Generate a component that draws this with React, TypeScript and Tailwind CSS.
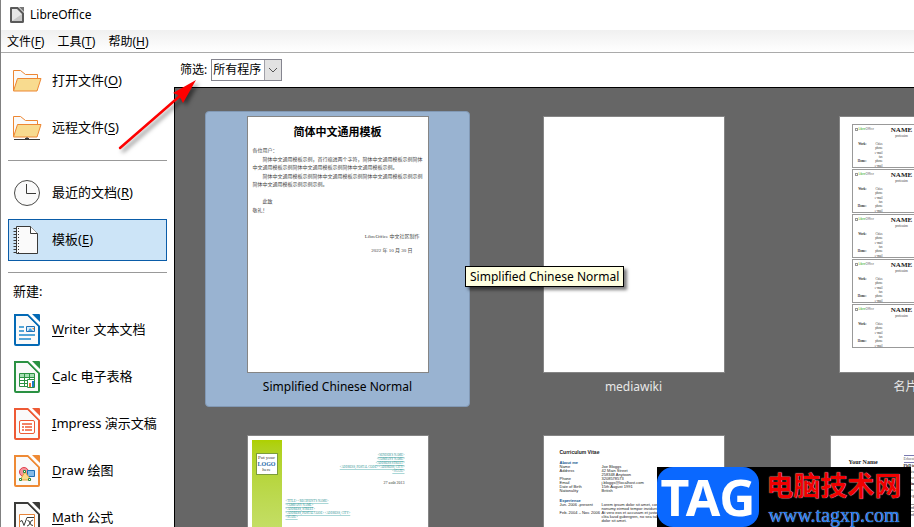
import type { ReactNode } from "react";

interface CvEntry {
  label: string;
  lines: string[];
}

const MENUS = [
  { label: "文件", accessKey: "F" },
  { label: "工具", accessKey: "T" },
  { label: "帮助", accessKey: "H" },
];

const CV_ROWS: CvEntry[] = [
  { label: "Name", lines: ["Joe Bloggs"] },
  { label: "Address", lines: ["42 Main Street", "258348 Anytown"] },
  { label: "Phone", lines: ["3208578573"] },
  { label: "Email", lines: ["j.bloggs@localhost.com"] },
  { label: "Date of Birth", lines: ["15th August 1991"] },
  { label: "Nationality", lines: ["British"] },
];

const CV_JOBS: CvEntry[] = [
  {
    label: "Jun. 2006 -present",
    lines: ["Lorem ipsum dolor sit amet, consetetur sadipscing", "nonumy eirmod tempor invidunt"],
  },
  {
    label: "Feb. 2004 – Nov. 2006",
    lines: ["At vero eos et accusam et justo duo dolores", "clita kasd gubergren, no sea takimata", "dolor sit amet."],
  },
];

function AccessKey({ children }: { children: ReactNode }) {
  return <span className="underline decoration-1 underline-offset-2">{children}</span>;
}

function AppIcon() {
  return (
    <svg className="h-4 w-4" viewBox="0 0 16 16" aria-hidden="true">
      <path d="M2 0h7l6 6v8.500q0 1.500-1.500 1.500h-11Q1 16 1 15V1Q1 0 2 0z" fill="#5a5a5a" />
      <path d="M3 2h5l5 5v7H3z" fill="#e6e6e6" />
      <path d="M3 14L13 7v7z" fill="#c8c8c8" />
      <path d="M10 0h5v5z" fill="#777" />
    </svg>
  );
}

function FolderIcon({ remote = false }: { remote?: boolean }) {
  return (
    <svg className="h-8 w-7 shrink-0 overflow-visible" viewBox="0 0 28 32" aria-hidden="true">
      <g transform={remote ? "translate(0 -1)" : undefined} stroke="#ed8733" strokeLinejoin="round">
        <path d="M1.500 25.500v-20h7l5 4h12v5" fill="#fafafa" />
        <path d="M5.500 13.500h23.500l-4 12.500H1.500z" fill="#f8db8f" />
      </g>
      {remote && <path d="M2 27.500h26M15 25v3" stroke="#3a3a38" strokeWidth="1" fill="none" />}
      {remote && <path d="M13 26h4v2h-4z" fill="#3a3a38" />}
    </svg>
  );
}

function ClockIcon() {
  return (
    <svg className="h-8 w-7 shrink-0" viewBox="0 0 28 32" aria-hidden="true">
      <circle cx="15" cy="16" r="12.500" fill="#fafafa" stroke="#4a4a48" />
      <path d="M14.500 7v9.500H24" fill="none" stroke="#3a3a38" />
    </svg>
  );
}

function NotebookIcon() {
  return (
    <svg className="h-8 w-7 shrink-0" viewBox="0 0 28 32" aria-hidden="true">
      <path d="M4.500 2.500h14l7 7v20h-21z" fill="#fafafa" stroke="#3a3a38" />
      <path d="M18.500 2.500v7h7" fill="#fff" stroke="#3a3a38" />
      <path d="M3 4v25" stroke="#3a3a38" strokeWidth="3" strokeDasharray="1 2" />
      <path d="M6.500 4v25" stroke="#3a3a38" strokeDasharray="1 2" />
    </svg>
  );
}

function DocumentIcon({ color, children }: { color: string; children: ReactNode }) {
  return (
    <svg className="h-8 w-7 shrink-0" viewBox="0 0 28 32" aria-hidden="true">
      <path d="M3 1h13l11 11v18q0 1-1 1H4q-1 0-1-1z" fill="#fafafa" stroke={color} strokeWidth="2" />
      <path d="M15 0h13v13z" fill="#fff" />
      <path d="M15 0l13 13" stroke={color} strokeWidth="1.500" />
      <path d="M20 0h7q1 0 1 1v7z" fill={color} />
      {children}
    </svg>
  );
}

function WriterIcon() {
  return (
    <DocumentIcon color="#0369b5">
      <path d="M7 13h5M7 17h5M7 21h16M7 25h12" stroke="#1e8bcd" strokeWidth="1.500" />
      <path d="M14.500 12.500h8v5h-8z" fill="#d8ecfa" stroke="#1e6fb5" />
      <path d="M16 17l2-3 3 3z" fill="#4ba0dc" />
      <path d="M20 14h2v2z" fill="#f08c3a" />
    </DocumentIcon>
  );
}

function CalcIcon() {
  return (
    <DocumentIcon color="#2a9142">
      <path d="M7.500 12.500h15v13h-15z" fill="#fff" stroke="#2a9142" />
      <path d="M8 13h14v3H8z" fill="#a5ddb2" />
      <path d="M7 16.500h16M7 19.500h16M7 22.500h16M12.500 12v14M17.500 12v14" stroke="#2a9142" />
      <path d="M15.500 18.500h7v8h-7z" fill="#fff" stroke="#2a9142" />
      <path d="M17 22h2v4h-2z" fill="#e5742e" />
      <path d="M20 20h2v6h-2z" fill="#1e78c8" />
    </DocumentIcon>
  );
}

function ImpressIcon() {
  return (
    <DocumentIcon color="#ee5a35">
      <rect x="7.500" y="12.500" width="15" height="13" rx="1.500" fill="#fff" stroke="#ee5a35" />
      <path d="M10 16h10M10 19h2M13 19h7M10 22h2M13 22h7" stroke="#ee5a35" strokeWidth="1.500" />
    </DocumentIcon>
  );
}

function DrawIcon() {
  return (
    <DocumentIcon color="#ee8a35">
      <circle cx="12" cy="17" r="4.500" fill="#f4949b" stroke="#e03e4c" />
      <path d="M15.500 15.500h7v6h-7z" fill="#84bbe8" stroke="#1e6fb5" />
      <path d="M13 17l6 8H8z" fill="#fadb8c" stroke="#e9a23a" />
      <path d="M11.500 15.500h2v2h-2zM7.500 23.500h2v2h-2zM16.500 23.500h2v2h-2z" fill="#fff" stroke="#2a8a3c" />
    </DocumentIcon>
  );
}

function MathIcon() {
  return (
    <DocumentIcon color="#3a3a38">
      <path d="M7.500 12.500h15v13h-15z" fill="#fff" stroke="#e5843a" />
      <path d="M8 19.500l2-1 2 5 3-8h7M15.500 18.500q2 0 2.500 2.500t3 2.500M21 18q-2 0-3 3t-3 3" fill="none" stroke="#3a3a38" />
    </DocumentIcon>
  );
}

function SideButton({ icon, active = false, children }: { icon: ReactNode; active?: boolean; children: ReactNode }) {
  return (
    <button
      type="button"
      aria-pressed={active}
      className={
        active
          ? "flex h-[42px] w-full shrink-0 items-center gap-3 border border-[#0a5ca8] bg-[#cce4f7] pl-[3px] text-left"
          : "flex h-[42px] w-full shrink-0 items-center gap-3 border border-transparent pl-[3px] text-left"
      }
    >
      {icon}
      <span className="whitespace-nowrap">{children}</span>
    </button>
  );
}

function Sidebar() {
  return (
    <nav className="flex w-[173px] shrink-0 flex-col gap-[5px] bg-white pt-[7px] pr-[7px] pl-[7px] text-[13px]">
      <SideButton icon={<FolderIcon />}>
        打开文件(<AccessKey>O</AccessKey>)
      </SideButton>
      <SideButton icon={<FolderIcon remote />}>
        远程文件(<AccessKey>S</AccessKey>)
      </SideButton>
      <hr className="my-[6px] border-[#999]" />
      <SideButton icon={<ClockIcon />}>
        最近的文档(<AccessKey>R</AccessKey>)
      </SideButton>
      <SideButton icon={<NotebookIcon />} active>
        模板(<AccessKey>E</AccessKey>)
      </SideButton>
      <hr className="mt-[6px] border-[#999]" />
      <h2 className="mt-[3px] shrink-0 pl-[5px] leading-5">新建:</h2>
      <div className="mt-[3px] flex flex-col gap-[5px]">
        <SideButton icon={<WriterIcon />}>
          <AccessKey>W</AccessKey>riter 文本文档
        </SideButton>
        <SideButton icon={<CalcIcon />}>
          <AccessKey>C</AccessKey>alc 电子表格
        </SideButton>
        <SideButton icon={<ImpressIcon />}>
          <AccessKey>I</AccessKey>mpress 演示文稿
        </SideButton>
        <SideButton icon={<DrawIcon />}>
          <AccessKey>D</AccessKey>raw 绘图
        </SideButton>
        <SideButton icon={<MathIcon />}>
          <AccessKey>M</AccessKey>ath 公式
        </SideButton>
      </div>
    </nav>
  );
}

function ChinesePage() {
  return (
    <div className="px-[5px] pt-[5px] font-['Liberation_Serif','Noto_Sans_CJK_SC',serif] text-[5px] leading-[8px] whitespace-nowrap text-[#444]">
      <h3 className="text-center text-[11px] leading-5 font-bold text-black">简体中文通用模板</h3>
      <p className="mt-[5px]">各位用户：</p>
      <p className="mt-px indent-[10px]">
        简体中文通用模板示例，首行缩进两个字符，简体中文通用模板示例简体
        <br />
        中文通用模板示例简体中文通用模板示例简体中文通用模板示例。
      </p>
      <p className="mt-px indent-[10px]">
        简体中文通用模板示例简体中文通用模板示例简体中文通用模板示例示例
        <br />
        简体中文通用模板示例示例示例。
      </p>
      <p className="mt-[9px] indent-[10px]">此致</p>
      <p className="mt-px">敬礼！</p>
      <p className="mt-[18px] pr-[3px] text-right">LibreOffice 中文社区制作</p>
      <p className="mt-[6px] pr-[10px] text-right">2022 年 10 月 30 日</p>
    </div>
  );
}

function BusinessCard() {
  return (
    <div className="flex h-[44px] border border-[#999] pt-[2px] pl-[2px] font-['Liberation_Serif',serif] text-[3px] leading-[4px] text-[#333]">
      <div className="w-[28px]">
        <p className="flex items-center gap-px font-['Noto_Sans',sans-serif] text-[#666]">
          <span className="h-[3px] w-[3px] border border-[#999]" />
          <span>
            <span className="text-[#18a303]">Libre</span>Office
          </span>
        </p>
        <div className="mt-[11px] grid h-[26px] grid-cols-2 gap-x-1 text-right">
          <b>Work:</b>
          <span>Cities</span>
          <span />
          <span>phone</span>
          <span />
          <span>e-mail</span>
          <span />
          <span>fax</span>
          <b>Home:</b>
          <span>phone</span>
          <span />
          <span>e-mail</span>
        </div>
      </div>
      <div className="ml-[8px] w-[22px] text-center">
        <p className="text-[7px] leading-[6px] font-bold text-[#222]">NAME</p>
        <p className="mt-px">profession</p>
      </div>
    </div>
  );
}

function BusinessCardsPage() {
  return (
    <div className="flex flex-col gap-px pt-[7px] pr-3 pl-3">
      <BusinessCard />
      <BusinessCard />
      <BusinessCard />
      <BusinessCard />
      <BusinessCard />
    </div>
  );
}

function LetterPage() {
  return (
    <div className="flex h-full pt-1 pl-1 font-['Liberation_Serif',serif] text-[3px] leading-[4px] whitespace-nowrap text-[#1f9090]">
      <div className="w-[30px] shrink-0 bg-linear-to-b from-[#aed000] to-[#eef6bf] pt-[13px] pl-1">
        <div className="flex h-[22px] w-[22px] flex-col items-center justify-center border border-[#7d9c3c] bg-white text-[5px] leading-[6px] text-[#333]">
          <span>Put your</span>
          <b className="text-[6px] text-[#1c6aa8]">LOGO</b>
          <span>here</span>
        </div>
      </div>
      <div className="flex-1 pt-[13px] pr-[23px] pl-1">
        <div className="text-right underline decoration-[#2a9a9a]/40">
          <p>&lt;SENDER'S NAME&gt;</p>
          <p>&lt;COMPANY NAME&gt;</p>
          <p>&lt;ADDRESS STREET&gt;</p>
          <p>&lt;ADDRESS, POSTAL CODE&gt; &lt;ADDRESS, CITY&gt;</p>
          <p>&lt;STATE&gt;</p>
        </div>
        <p className="mt-2 text-right text-[4px] text-[#333]">27 août 2013</p>
        <div className="mt-[14px] underline decoration-[#2a9a9a]/40">
          <p>&lt;TITLE&gt; &lt;RECIPIENT'S NAME&gt;</p>
          <p>&lt;COMPANY NAME&gt;</p>
          <p>&lt;ADDRESS, STREET&gt;</p>
          <p>&lt;ADDRESS, POSTAL CODE&gt; &lt;ADDRESS, CITY&gt;</p>
          <p>&lt;STATE&gt;</p>
        </div>
      </div>
    </div>
  );
}

function CvRows({ rows }: { rows: CvEntry[] }) {
  return (
    <dl className="grid grid-cols-[42px_1fr]">
      {rows.map((row) => (
        <div key={row.label} className="contents">
          <dt>{row.label}</dt>
          <dd>
            {row.lines.map((line) => (
              <p key={line}>{line}</p>
            ))}
          </dd>
        </div>
      ))}
    </dl>
  );
}

function CvPage() {
  return (
    <div className="pt-[12px] pl-4 font-['Liberation_Sans',sans-serif] text-[4px] leading-[4px] whitespace-nowrap text-[#222]">
      <h3 className="text-[5px] leading-[8px] font-bold">Curriculum Vitae</h3>
      <h4 className="mt-1 leading-[5px] font-bold text-[#14548c]">About me</h4>
      <CvRows rows={CV_ROWS} />
      <h4 className="mt-[5px] leading-[5px] font-bold text-[#14548c]">Experience</h4>
      <CvRows rows={CV_JOBS} />
    </div>
  );
}

function ResumePage() {
  return (
    <div className="flex pt-[19px] pl-[18px] font-['Liberation_Serif',serif] whitespace-nowrap text-[#222]">
      <h3 className="w-[55px] pt-[3px] text-[6px] leading-[8px] font-bold">Your Name</h3>
      <div className="flex-1 text-[4px] leading-[6px]">
        <p className="border-y border-[#7a7ab0] text-[#666]">Education</p>
        <p className="font-bold">PhD in English</p>
        <p>Thesis and research</p>
        <p>University</p>
        <p className="font-bold">MA in English</p>
        <p>Areas of study</p>
        <p>College</p>
        <p className="mt-[5px] border-y border-[#999]">Awards</p>
        <p>Award title</p>
      </div>
    </div>
  );
}

function TemplateItem({
  name,
  selected = false,
  wide = false,
  children,
}: {
  name: string;
  selected?: boolean;
  wide?: boolean;
  children?: ReactNode;
}) {
  return (
    <li
      className={
        selected
          ? "flex flex-col items-center rounded border border-[#8299b5] bg-[#99b3d1] pt-1 pb-[9px] text-black"
          : "flex flex-col items-center rounded border border-transparent pt-1 pb-[9px] text-[#e8e8e8]"
      }
    >
      <div
        className={
          wide
            ? "h-[257px] w-[200px] overflow-hidden border border-[#858585] bg-white"
            : "h-[257px] w-[182px] overflow-hidden border border-[#858585] bg-white"
        }
      >
        {children}
      </div>
      <span className="mt-1 text-[12px] leading-5">{name}</span>
    </li>
  );
}

function Gallery() {
  return (
    <div className="min-h-0 flex-1 overflow-hidden border-t border-l border-black bg-[#666]">
      <ul className="grid grid-cols-[repeat(3,265px)] gap-x-[31px] gap-y-[23px] pt-[23px] pl-[30px]">
        <TemplateItem name="Simplified Chinese Normal" selected>
          <ChinesePage />
        </TemplateItem>
        <TemplateItem name="mediawiki" />
        <TemplateItem name="名片，含标志">
          <BusinessCardsPage />
        </TemplateItem>
        <TemplateItem name="现代信函">
          <LetterPage />
        </TemplateItem>
        <TemplateItem name="简历">
          <CvPage />
        </TemplateItem>
        <TemplateItem name="履历" wide>
          <ResumePage />
        </TemplateItem>
      </ul>
    </div>
  );
}

function FilterBar() {
  return (
    <div className="flex h-[34px] shrink-0 items-center gap-1 bg-white pl-[6px] text-[12px]">
      <label htmlFor="filter">筛选:</label>
      <div className="grid h-[22px] w-[71px] grid-cols-1 border border-[#85858f]">
        <select id="filter" className="col-start-1 row-start-1 appearance-none bg-white pl-px outline-none">
          <option>所有程序</option>
        </select>
        <span className="pointer-events-none col-start-1 row-start-1 flex w-[17px] items-center justify-center justify-self-end border-l border-[#a0a0a8] bg-[#e2e2e2]">
          <svg className="h-2 w-3" viewBox="0 0 12 8" aria-hidden="true">
            <path d="M2 2l4 4 4-4" fill="none" stroke="#555" />
          </svg>
        </span>
      </div>
    </div>
  );
}

function Arrow() {
  return (
    <svg
      className="pointer-events-none absolute top-[76px] left-[112px] h-[80px] w-[92px] drop-shadow-[3px_3px_2px_rgba(0,0,0,0.5)]"
      viewBox="0 0 92 80"
      aria-hidden="true"
    >
      <path d="M7 72L68 19" stroke="#fe0000" strokeWidth="2.500" strokeLinecap="round" />
      <path d="M83 4L60 17l5 2 3 4 2 4z" fill="#fe0000" />
    </svg>
  );
}

function Watermark() {
  return (
    <div className="absolute right-[3px] bottom-0 flex h-[60px] w-[254px] bg-black">
      <div className="flex w-[102px] items-center justify-center rounded-2xl bg-[#0a68ff] font-['Noto_Sans',sans-serif] text-[50px] leading-[56px] font-bold text-white">
        TAG
      </div>
      <div className="flex flex-1 flex-col items-center pr-[2px] whitespace-nowrap">
        <span className="font-['Noto_Sans_CJK_SC',sans-serif] text-[27px] leading-[35px] font-bold text-[#f00000] [text-shadow:0_0_1px_#fff]">
          电脑技术网
        </span>
        <span className="font-['Liberation_Serif',serif] text-[20px] leading-[26px] text-[#1478f0] [text-shadow:0_0_1px_#fff]">
          www.tagxp.com
        </span>
      </div>
    </div>
  );
}

export default function App() {
  return (
    <div className="relative flex h-screen flex-col overflow-hidden border-l border-[#808080] bg-white font-['Noto_Sans','Noto_Sans_CJK_SC',sans-serif] text-black">
      <header className="flex h-[30px] shrink-0 items-center gap-[5px] pl-2 text-[12px]">
        <AppIcon />
        <h1>LibreOffice</h1>
      </header>
      <div className="flex h-[23px] shrink-0 items-center gap-[13px] border-b border-[#aaa] bg-linear-to-b from-[#f0f0f0] to-white pt-[2px] pl-[6px] text-[12px]">
        {MENUS.map((menu) => (
          <button key={menu.label} type="button">
            {menu.label}(<AccessKey>{menu.accessKey}</AccessKey>)
          </button>
        ))}
      </div>
      <div className="flex min-h-0 flex-1">
        <Sidebar />
        <main className="flex min-w-0 flex-1 flex-col">
          <FilterBar />
          <Gallery />
        </main>
      </div>
      <div
        role="tooltip"
        className="absolute top-[266px] left-[464px] border border-black bg-[#ffffe1] px-1 text-[12px] leading-[19px] whitespace-nowrap shadow-[3px_3px_3px_rgba(0,0,0,0.5)]"
      >
        Simplified Chinese Normal
      </div>
      <Arrow />
      <Watermark />
    </div>
  );
}
